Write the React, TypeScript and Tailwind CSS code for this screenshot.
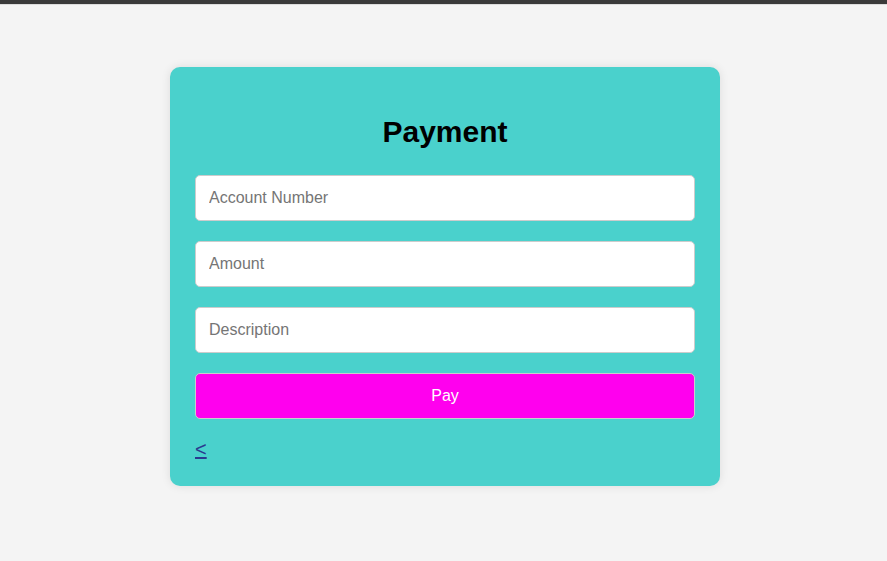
import React from "react";

export default function App() {
  return (
    <div className="min-h-[561px] bg-[#f4f4f4]" style={{ fontFamily: '"Liberation Sans", Arial, sans-serif' }}>
      <div className="h-[4px] bg-[#3a3a3a]" />
      <div className="h-[1px] bg-[#dcdcdc]" />
      <div className="flex justify-center pl-[3px] pt-[62px]">
        <div className="w-[550px] rounded-[10px] bg-[#4ad1cc] px-[25px] pt-[25px] pb-[25px] shadow-[0_0_10px_rgba(0,0,0,0.1)]">
          <h2 className="mt-[22px] text-center text-[30px] font-bold leading-[36px] text-black">Payment</h2>
          <div className="mt-[25px] flex flex-col gap-[20px]">
            <input
              className="h-[46px] w-full rounded-[5px] border border-[#cccccc] bg-white px-[13px] text-[16px] text-black outline-none placeholder:text-[#757575]"
              placeholder="Account Number"
            />
            <input
              className="h-[46px] w-full rounded-[5px] border border-[#cccccc] bg-white px-[13px] text-[16px] text-black outline-none placeholder:text-[#757575]"
              placeholder="Amount"
            />
            <input
              className="h-[46px] w-full rounded-[5px] border border-[#cccccc] bg-white px-[13px] text-[16px] text-black outline-none placeholder:text-[#757575]"
              placeholder="Description"
            />
            <button className="h-[46px] w-full rounded-[5px] border border-[#cccccc] bg-[#ff00ee] text-[16px] text-white">
              Pay
            </button>
          </div>
          <div className="mt-[20px] h-[22px] leading-[20px]">
            <a href="#" className="text-[20px] text-[#2a3a8f] underline">&lt;</a>
          </div>
        </div>
      </div>
    </div>
  );
}
